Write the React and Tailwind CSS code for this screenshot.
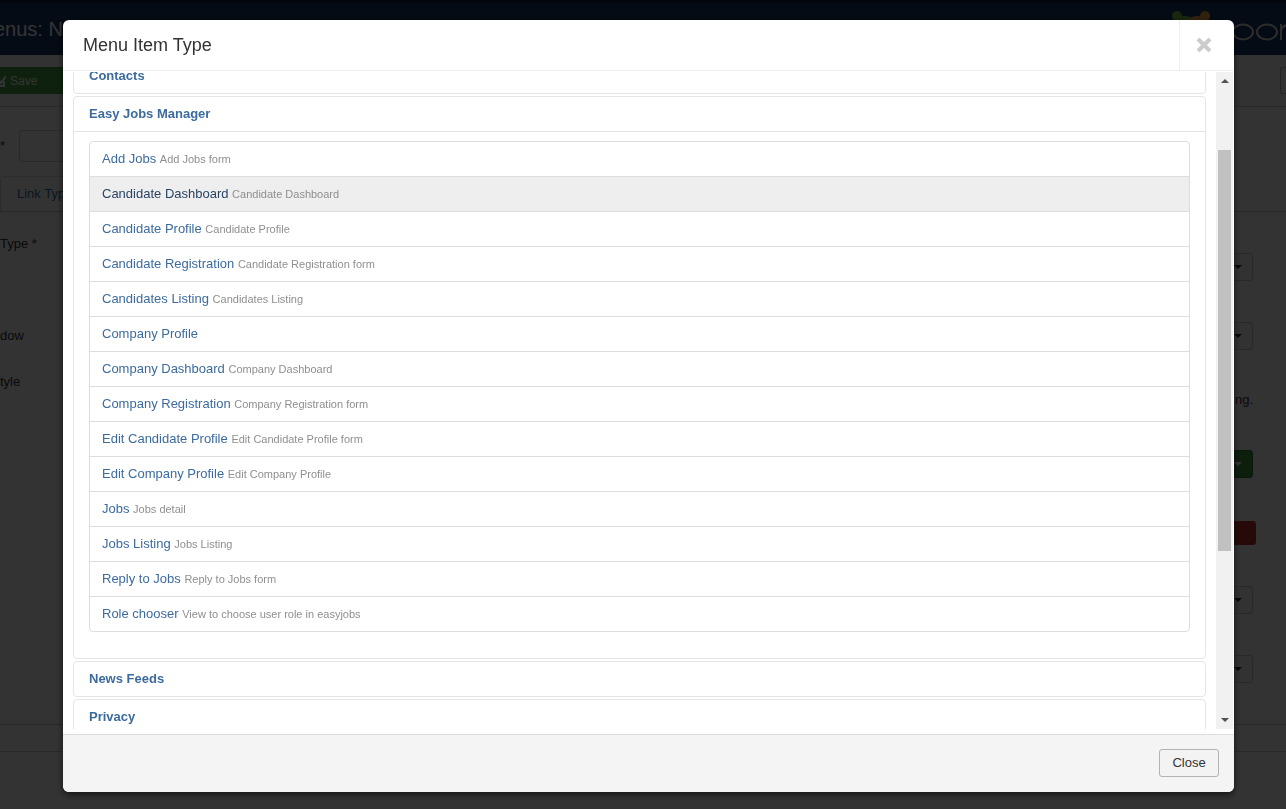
import { useLayoutEffect, useRef } from 'react';

const jobItems = [
  { title: 'Add Jobs', description: 'Add Jobs form' },
  { title: 'Candidate Dashboard', description: 'Candidate Dashboard', active: true },
  { title: 'Candidate Profile', description: 'Candidate Profile' },
  { title: 'Candidate Registration', description: 'Candidate Registration form' },
  { title: 'Candidates Listing', description: 'Candidates Listing' },
  { title: 'Company Profile', description: '' },
  { title: 'Company Dashboard', description: 'Company Dashboard' },
  { title: 'Company Registration', description: 'Company Registration form' },
  { title: 'Edit Candidate Profile', description: 'Edit Candidate Profile form' },
  { title: 'Edit Company Profile', description: 'Edit Company Profile' },
  { title: 'Jobs', description: 'Jobs detail' },
  { title: 'Jobs Listing', description: 'Jobs Listing' },
  { title: 'Reply to Jobs', description: 'Reply to Jobs form' },
  { title: 'Role chooser', description: 'View to choose user role in easyjobs' },
];

const groups = [
  { title: 'Contacts' },
  { title: 'Easy Jobs Manager', items: jobItems },
  { title: 'News Feeds' },
  { title: 'Privacy' },
];

function Caret({ className = 'fill-[#222]' }) {
  return (
    <svg viewBox="0 0 8 4" className={`h-1 w-2 ${className}`} aria-hidden="true">
      <path d="M0 0h8L4 4z" />
    </svg>
  );
}

function JoomlaLogo() {
  return (
    <div className="flex items-start gap-[21px]">
      <svg viewBox="0 0 38 38" className="h-[38px] w-[38px]" fill="none" strokeWidth="6" aria-hidden="true">
        <path d="M5 5Q8 9 13 8Q17 8 20 11L27 19" stroke="#7ac143" />
        <path d="M33 5Q30 9 25 8Q21 8 18 11L11 19" stroke="#f9a541" />
        <path d="M5 33Q9 30 8 25Q8 21 11 18L19 11" stroke="#5091cd" />
        <path d="M33 33Q30 29 25 30Q21 30 18 27L11 19" stroke="#f44321" />
        <circle cx="5" cy="5" r="5" fill="#7ac143" />
        <circle cx="33" cy="5" r="5" fill="#f9a541" />
        <circle cx="5" cy="33" r="5" fill="#5091cd" />
        <circle cx="33" cy="33" r="5" fill="#f44321" />
      </svg>
      <svg viewBox="0 0 55 24" className="mt-2 h-6 w-[55px]" fill="none" stroke="#ddd" strokeWidth="2" aria-hidden="true">
        <ellipse cx="12" cy="13" rx="10" ry="7.5" />
        <ellipse cx="36" cy="13" rx="10" ry="7.5" />
        <path d="M50 21V5M50 12q1-6 8-6" />
      </svg>
    </div>
  );
}

function SelectButton({ label }) {
  return (
    <button
      type="button"
      aria-label={label}
      className="flex h-7 w-40 items-center justify-end rounded-[3px] border border-[#ccc] bg-[#f8f8f8] pr-2.5"
    >
      <Caret />
    </button>
  );
}

function BackgroundPage() {
  return (
    <div className="flex h-screen flex-col overflow-hidden bg-white text-[13px] leading-[18px] text-[#333]">
      <div className="h-[3px] shrink-0 bg-[#10223e]" />
      <header className="flex h-[52px] shrink-0 items-start justify-between bg-[#1a3867]">
        <h1 className="-ml-1.5 pt-3 text-[20px] leading-7 text-white">enus: N</h1>
        <div className="pt-2">
          <JoomlaLogo />
        </div>
      </header>
      <div className="flex h-[52px] shrink-0 items-center justify-between border-b border-[#ccc] bg-[#f9f9f9]">
        <button
          type="button"
          className="flex h-[27px] w-36 items-center gap-1 bg-[#46a546] text-xs text-white"
        >
          <svg viewBox="0 0 6 12" className="h-3 w-1.5" fill="none" stroke="#fff" strokeWidth="2" aria-hidden="true">
            <path d="M0 11h4V6M0 6l1 2 5-7" />
          </svg>
          Save
        </button>
        <button
          type="button"
          aria-label="Help"
          className="h-[27px] w-1.5 rounded-l-[3px] border border-r-0 border-[#bbb]"
        />
      </div>
      <div className="flex h-[69px] shrink-0 items-center gap-3.5 pt-2">
        <label htmlFor="title">*</label>
        <input id="title" className="h-8 w-60 rounded-[3px] border border-[#ccc]" />
      </div>
      <nav className="flex h-9 shrink-0 border-b border-[#ccc]">
        <a href="#link" className="rounded-t border border-b-0 border-[#ddd] px-4 py-2 text-[#3071a9]">
          Link Type
        </a>
      </nav>
      <div className="flex justify-between pr-[33px]">
        <div className="flex flex-col pt-[23px]">
          <p className="pb-[74px]">Type *</p>
          <p className="pb-7">dow</p>
          <p>tyle</p>
        </div>
        <div className="flex flex-col items-end pt-[41px]">
          <SelectButton label="Parent item" />
          <div className="h-[41px]" />
          <SelectButton label="Ordering" />
          <p className="py-[41px]">ng.</p>
          <button
            type="button"
            aria-label="Status"
            className="flex h-7 w-40 items-center justify-end rounded-[3px] border border-[#2f7d2f] bg-[#409740] pr-2.5"
          >
            <Caret className="fill-white" />
          </button>
          <button
            type="button"
            aria-label="Unpublish"
            className="-mr-[3px] mt-[43px] mb-[41px] h-6 w-40 rounded-[3px] bg-[#bd362f]"
          />
          <SelectButton label="Access" />
          <div className="h-[41px]" />
          <SelectButton label="Language" />
        </div>
      </div>
      <div className="mt-[41px] h-7 shrink-0 border-y border-[#ccc]" />
    </div>
  );
}

function MenuGroup({ title, items }) {
  return (
    <section className="rounded-[4px] border border-[#e5e5e5]">
      <h4 className="font-bold">
        <a href="#group" className="block px-[15px] py-2 text-[#3d6b9e]">
          {title}
        </a>
      </h4>
      {items && (
        <div className="border-t border-[#e5e5e5] px-[15px] pt-[9px] pb-[26px]">
          <ul className="divide-y divide-[#ddd] rounded-[4px] border border-[#ddd]">
            {items.map((item) => (
              <li key={item.title}>
                <a
                  href="#item"
                  className={`block px-3 py-2 ${item.active ? 'bg-[#eee] text-[#2a4464]' : 'text-[#3d6b9e]'}`}
                >
                  {item.title} <small className="text-[11px] text-[#8f8f8f]">{item.description}</small>
                </a>
              </li>
            ))}
          </ul>
        </div>
      )}
    </section>
  );
}

function Scrollbar() {
  return (
    <div className="flex w-[17px] shrink-0 flex-col items-center bg-[#f1f1f1] py-[7px]" aria-hidden="true">
      <Caret className="shrink-0 rotate-180 fill-[#505050]" />
      <div className="flex w-[13px] flex-1 flex-col py-[7px]">
        <div className="grow-[60]" />
        <div className="grow-[402] bg-[#c1c1c1]" />
        <div className="grow-[161]" />
      </div>
      <Caret className="shrink-0 fill-[#505050]" />
    </div>
  );
}

function MenuTypeModal() {
  const listRef = useRef(null);

  // open slightly scrolled, with the expanded group in view
  useLayoutEffect(() => {
    listRef.current.scrollTop = 14;
  }, []);

  return (
    <div
      role="dialog"
      aria-labelledby="modal-title"
      className="flex w-full flex-col overflow-hidden rounded-md bg-white text-[13px] leading-[18px] text-[#333] shadow-[0_3px_7px_rgba(0,0,0,0.6)]"
    >
      <div className="flex h-[51px] shrink-0 items-stretch justify-between border-b border-[#eee]">
        <h3 id="modal-title" className="self-center pl-5 text-lg leading-6">
          Menu Item Type
        </h3>
        <button
          type="button"
          aria-label="Close dialog"
          className="flex w-[55px] items-center border-l border-[#eee] pl-4"
        >
          <svg viewBox="0 0 16 16" className="h-4 w-4" stroke="#ccc" strokeWidth="4" aria-hidden="true">
            <path d="M2 2l12 12M14 2L2 14" />
          </svg>
        </button>
      </div>

      <div className="flex min-h-0 flex-1 gap-2.5 pt-px pr-px pb-[5px] pl-2.5">
        <div
          ref={listRef}
          className="flex min-w-0 flex-1 flex-col gap-0.5 overflow-y-auto [scrollbar-width:none] *:shrink-0"
        >
          {groups.map((group) => (
            <MenuGroup key={group.title} title={group.title} items={group.items} />
          ))}
        </div>
        <Scrollbar />
      </div>

      <div className="flex shrink-0 justify-end border-t border-[#ddd] bg-[#f4f4f4] px-[15px] pt-3.5 pb-[15px]">
        <button
          type="button"
          className="h-7 w-[60px] rounded-[3px] border border-[#b3b3b3] bg-[#f3f3f3] text-center"
        >
          Close
        </button>
      </div>
    </div>
  );
}

export default function App() {
  return (
    <div className="font-['Liberation_Sans',Arial,sans-serif]">
      <BackgroundPage />
      <div className="fixed inset-0 flex bg-black/80 pt-5 pr-[52px] pb-[17px] pl-[63px]">
        <MenuTypeModal />
      </div>
    </div>
  );
}
